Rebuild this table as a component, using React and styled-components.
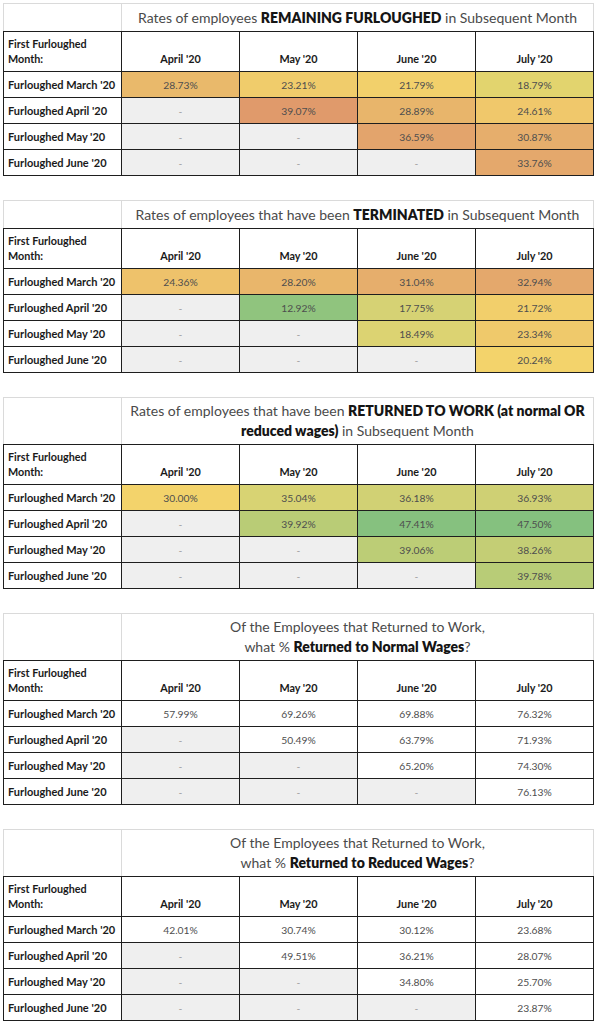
import React from "react";
import styled, { createGlobalStyle } from "styled-components";

const GlobalStyle = createGlobalStyle`
  body {
    margin: 0;
    background: #ffffff;
    font-family: Lato, "Open Sans", sans-serif;
  }
`;

const Page = styled.div`
  display: flex;
  flex-direction: column;
  gap: 24px;
  padding: 3px 0 0 3px;
  width: 591px;
`;

const Table = styled.table`
  width: 591px;
  border-collapse: collapse;
  table-layout: fixed;
`;

const TitleRow = styled.tr`
  height: ${(p) => (p.$tall ? 47 : 28)}px;
`;

const Corner = styled.td`
  border: 1px solid #dadada;
  border-bottom: 1px solid #1e1e1e;
`;

const Title = styled.td`
  border: 1px solid #dadada;
  border-bottom: 1px solid #1e1e1e;
  padding: 0 6px;
  text-align: center;
  vertical-align: middle;
  font-size: 14px;
  line-height: 20px;
  color: #4a4a4a;
`;

const B = styled.b`
  font-weight: 800;
  color: #151515;
`;

const HeadRow = styled.tr`
  height: 40px;
`;

const HeadLabel = styled.th`
  border: 1px solid #1e1e1e;
  padding: 0 4px 5px;
  text-align: left;
  vertical-align: bottom;
  font-size: 10.8px;
  line-height: 15px;
  font-weight: 700;
  color: #1a1a1a;
`;

const HeadCell = styled.th`
  border: 1px solid #1e1e1e;
  padding: 0 4px 6px;
  text-align: center;
  vertical-align: bottom;
  font-size: 10.8px;
  font-weight: 700;
  color: #1a1a1a;
`;

const Row = styled.tr`
  height: 26px;
`;

const RowLabel = styled.th`
  border: 1px solid #1e1e1e;
  padding: 0 4px;
  text-align: left;
  white-space: nowrap;
  font-size: 11px;
  font-weight: 700;
  color: #1a1a1a;
`;

const Cell = styled.td`
  border: 1px solid #1e1e1e;
  background: ${(p) => p.$bg};
  color: ${(p) => (p.$empty ? "#9a9a9a" : "#4e4e4e")};
  text-align: center;
  font-size: 10.3px;
`;

const EMPTY = "#efefef";
const months = ["April '20", "May '20", "June '20", "July '20"];
const labels = ["Furloughed March '20", "Furloughed April '20", "Furloughed May '20", "Furloughed June '20"];

const tables = [
  {
    title: (
      <>
        Rates of employees <B>REMAINING FURLOUGHED</B> in Subsequent Month
      </>
    ),
    rows: [
      [["28.73%", "#e9b96b"], ["23.21%", "#f0cc6b"], ["21.79%", "#f2d06b"], ["18.79%", "#e2d46e"]],
      [null, ["39.07%", "#e09a6b"], ["28.89%", "#e8b56b"], ["24.61%", "#f0c86b"]],
      [null, null, ["36.59%", "#e3a46c"], ["30.87%", "#e6ae6c"]],
      [null, null, null, ["33.76%", "#e4a86c"]],
    ],
  },
  {
    title: (
      <>
        Rates of employees that have been <B>TERMINATED</B> in Subsequent Month
      </>
    ),
    rows: [
      [["24.36%", "#eec26b"], ["28.20%", "#e9b66b"], ["31.04%", "#e6ae6c"], ["32.94%", "#e4a86c"]],
      [null, ["12.92%", "#90c47e"], ["17.75%", "#d6d274"], ["21.72%", "#f2cf6b"]],
      [null, null, ["18.49%", "#dcd372"], ["23.34%", "#efc96b"]],
      [null, null, null, ["20.24%", "#f3d36b"]],
    ],
  },
  {
    tall: true,
    title: (
      <>
        Rates of employees that have been <B>RETURNED TO WORK (at normal OR</B>
        <br />
        <B>reduced wages)</B> in Subsequent Month
      </>
    ),
    rows: [
      [["30.00%", "#f3d36b"], ["35.04%", "#d8d373"], ["36.18%", "#d1d174"], ["36.93%", "#cfd074"]],
      [null, ["39.92%", "#b9cc76"], ["47.41%", "#86c17f"], ["47.50%", "#85c17f"]],
      [null, null, ["39.06%", "#bccd76"], ["38.26%", "#c4ce75"]],
      [null, null, null, ["39.78%", "#b8cc77"]],
    ],
  },
  {
    tall: true,
    title: (
      <>
        Of the Employees that Returned to Work,
        <br />
        what % <B>Returned to Normal Wages</B>?
      </>
    ),
    rows: [
      [["57.99%"], ["69.26%"], ["69.88%"], ["76.32%"]],
      [null, ["50.49%"], ["63.79%"], ["71.93%"]],
      [null, null, ["65.20%"], ["74.30%"]],
      [null, null, null, ["76.13%"]],
    ],
  },
  {
    tall: true,
    title: (
      <>
        Of the Employees that Returned to Work,
        <br />
        what % <B>Returned to Reduced Wages</B>?
      </>
    ),
    rows: [
      [["42.01%"], ["30.74%"], ["30.12%"], ["23.68%"]],
      [null, ["49.51%"], ["36.21%"], ["28.07%"]],
      [null, null, ["34.80%"], ["25.70%"]],
      [null, null, null, ["23.87%"]],
    ],
  },
];

function RateTable({ title, rows, tall }) {
  return (
    <Table>
      <tbody>
        <TitleRow $tall={tall}>
          <Corner />
          <Title colSpan={4}>{title}</Title>
        </TitleRow>
        <HeadRow>
          <HeadLabel>
            First Furloughed
            <br />
            Month:
          </HeadLabel>
          {months.map((m) => (
            <HeadCell key={m}>{m}</HeadCell>
          ))}
        </HeadRow>
        {rows.map((r, i) => (
          <Row key={labels[i]}>
            <RowLabel>{labels[i]}</RowLabel>
            {r.map((c, j) =>
              c ? (
                <Cell key={j} $bg={c[1] || "#ffffff"}>
                  {c[0]}
                </Cell>
              ) : (
                <Cell key={j} $bg={EMPTY} $empty>
                  -
                </Cell>
              )
            )}
          </Row>
        ))}
      </tbody>
    </Table>
  );
}

export default function App() {
  return (
    <>
      <GlobalStyle />
      <Page>
        {tables.map((t, i) => (
          <RateTable key={i} {...t} />
        ))}
      </Page>
    </>
  );
}
